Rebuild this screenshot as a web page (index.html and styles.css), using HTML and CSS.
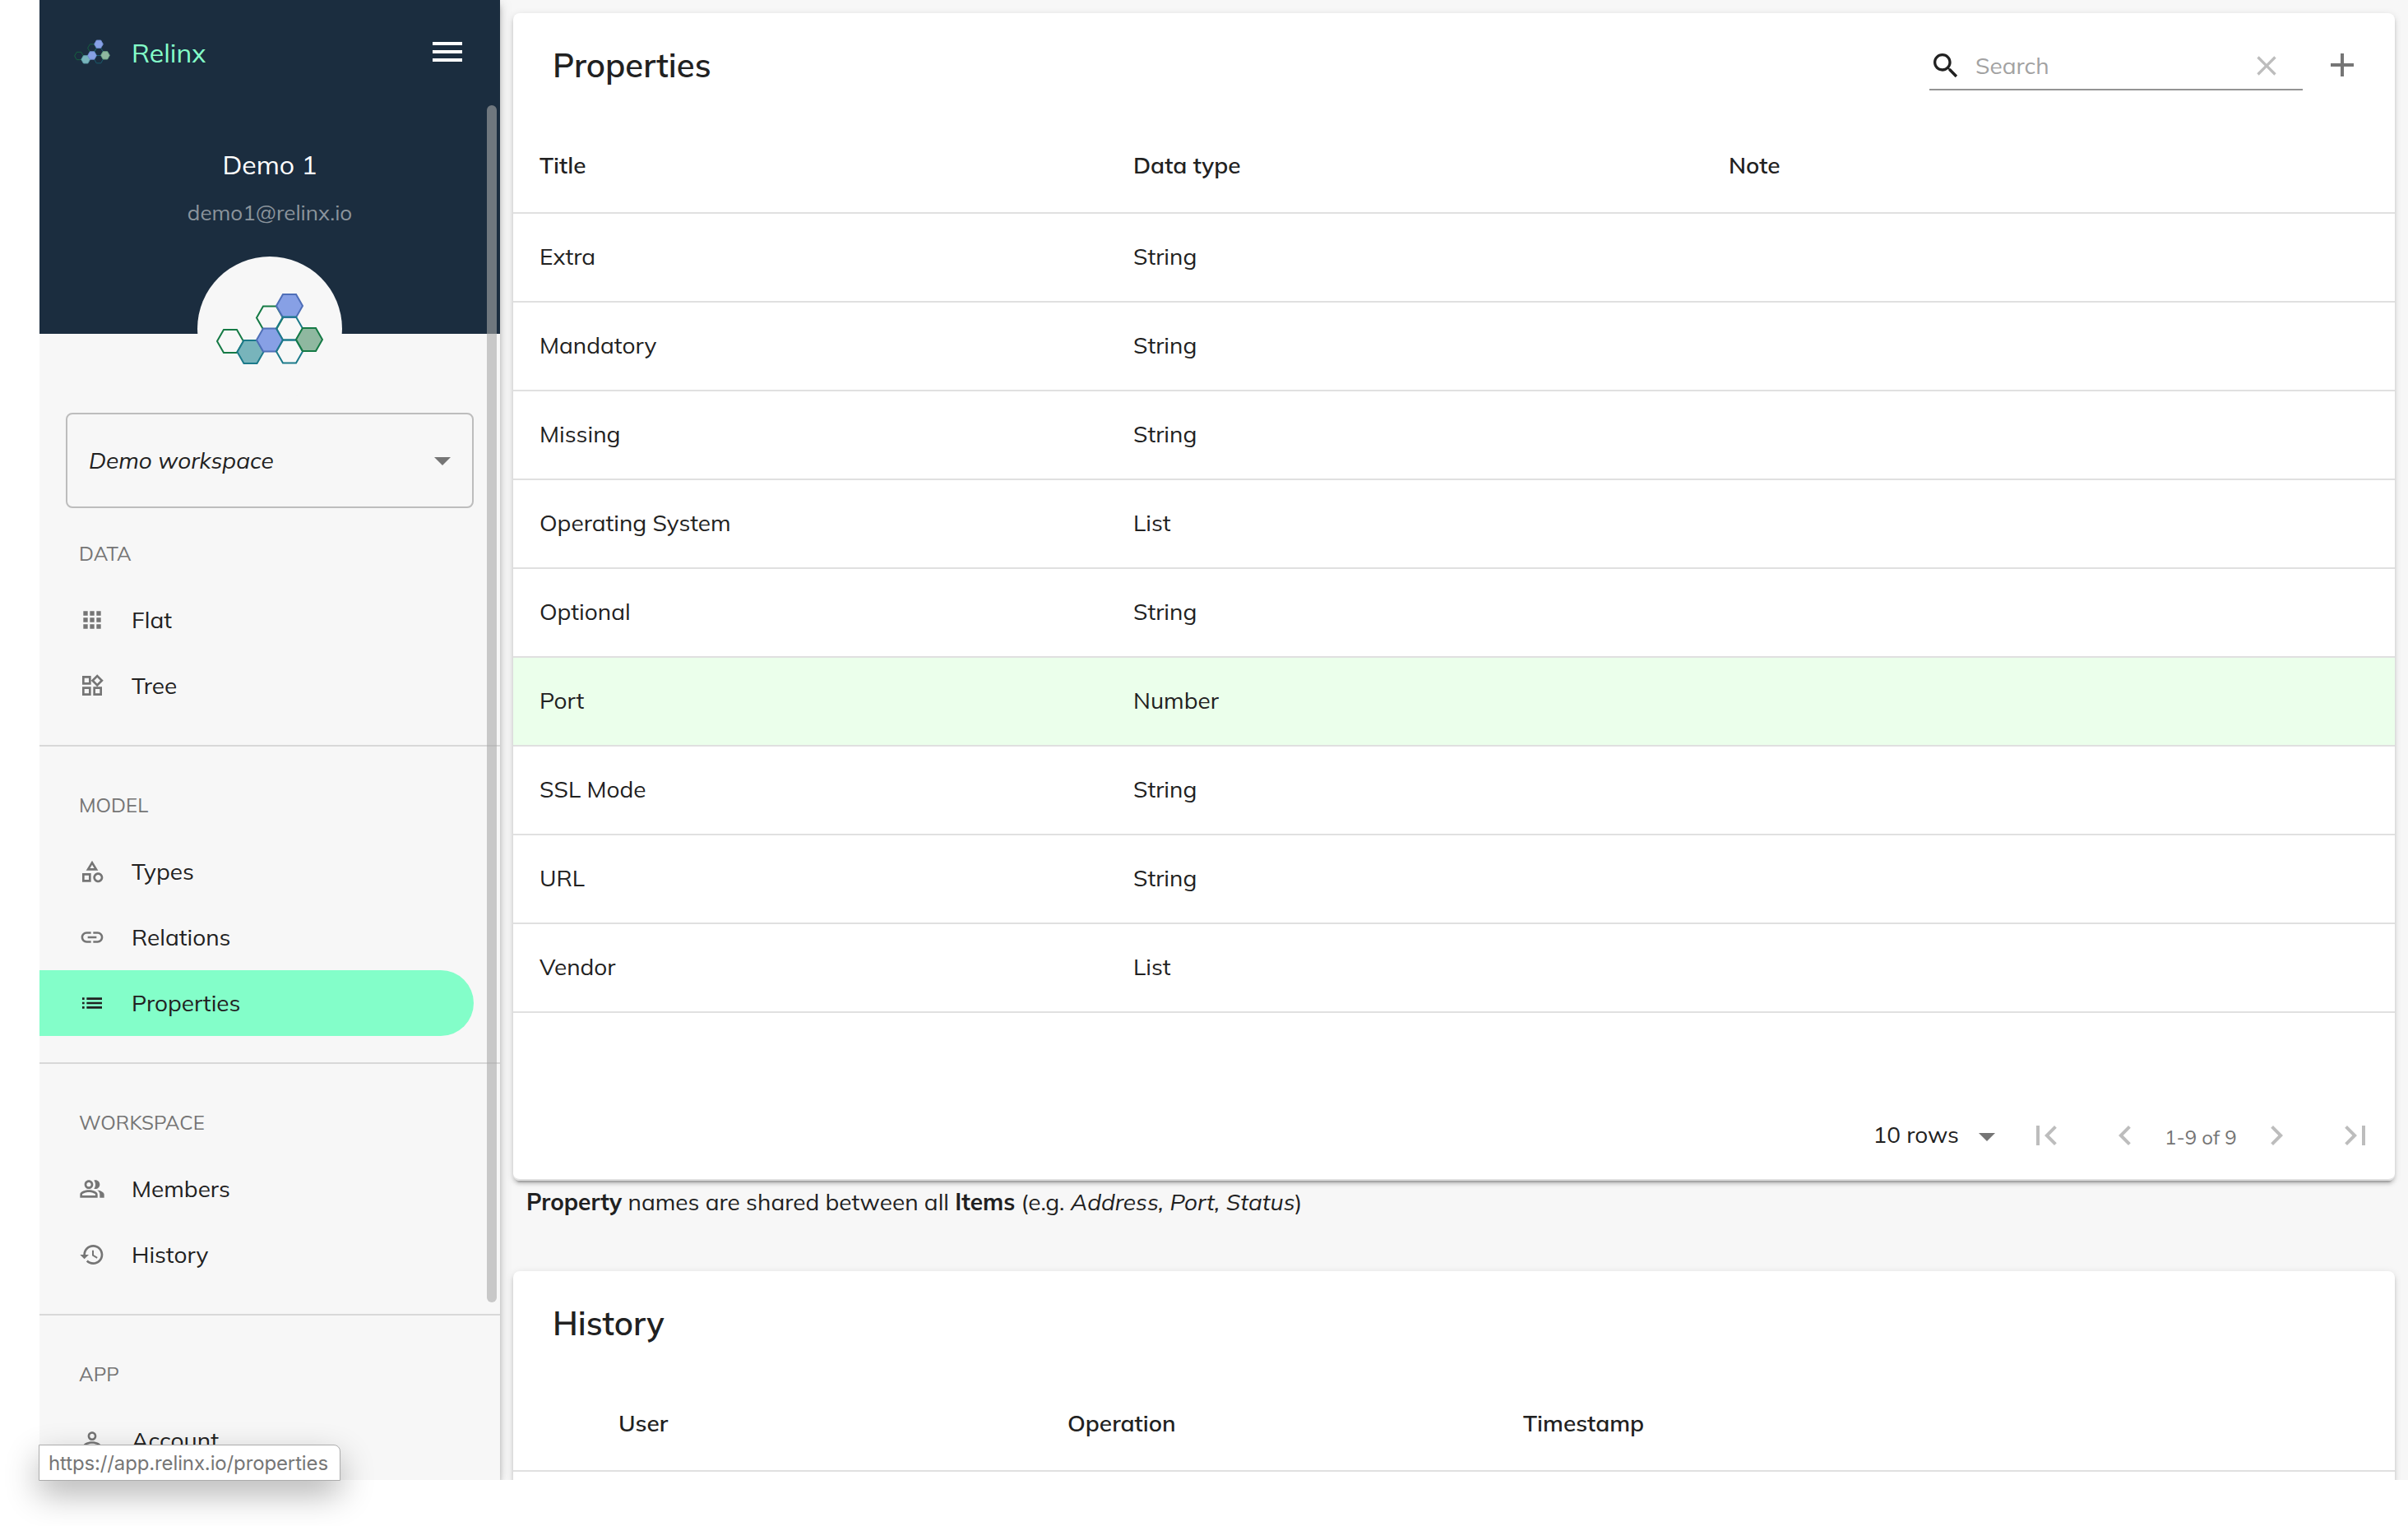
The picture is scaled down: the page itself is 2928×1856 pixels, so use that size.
FILE: index.html
```html
<!DOCTYPE html>
<html lang="en">
<head>
<meta charset="utf-8">
<title>Relinx - Properties</title>
<link rel="stylesheet" href="styles.css">
</head>
<body>
<svg class="defs" aria-hidden="true">
  <symbol id="logo" viewBox="0 0 132 88">
    <g stroke-width="2">
      <path d="M2 59l8-14h16l8 14l-8 14h-16z" fill="none" stroke="#157a45"/>
      <path d="M50 30.5l8-14h16l8 14l-8 14h-16z" fill="none" stroke="#157a45"/>
      <path d="M26.5 72l8-14h16l8 14l-8 14h-16z" fill="#78b4bb" stroke="#1c7a8a"/>
      <path d="M50 57.5l8-14h16l8 14l-8 14h-16z" fill="#87a0e5" stroke="#4f6fb8"/>
      <path d="M74 71.5l8-14h16l8 14l-8 14h-16z" fill="none" stroke="#1c7a8a"/>
      <path d="M74 16l8-14h16l8 14l-8 14h-16z" fill="#87a0e5" stroke="#4f6fb8"/>
      <path d="M74 43.5l8-14h16l8 14l-8 14h-16z" fill="none" stroke="#1c7a8a"/>
      <path d="M98 57l8-14h16l8 14l-8 14h-16z" fill="#8fb8a0" stroke="#157a45"/>
    </g>
  </symbol>
  <symbol id="logo-small" viewBox="0 0 132 88">
    <g stroke-width="2.8">
      <path d="M2 59l8-14h16l8 14l-8 14h-16z" fill="none" stroke="#176540"/>
      <path d="M50 30.5l8-14h16l8 14l-8 14h-16z" fill="none" stroke="#176540"/>
      <path d="M74 71.5l8-14h16l8 14l-8 14h-16z" fill="none" stroke="#1b5f70"/>
      <path d="M74 43.5l8-14h16l8 14l-8 14h-16z" fill="none" stroke="#1b5f70"/>
      <path d="M26.5 72l8-14h16l8 14l-8 14h-16z" fill="#78b4bb" stroke="#5fa0ab"/>
      <path d="M50 57.5l8-14h16l8 14l-8 14h-16z" fill="#87a0e5" stroke="#728fd4"/>
      <path d="M74 16l8-14h16l8 14l-8 14h-16z" fill="#87a0e5" stroke="#728fd4"/>
      <path d="M98 57l8-14h16l8 14l-8 14h-16z" fill="#8fb8a0" stroke="#6aa784"/>
    </g>
  </symbol>
</svg>

<div class="window">
  <aside class="sidebar">
    <header class="brand">
      <svg class="brand-logo"><use href="#logo-small"/></svg>
      <span class="brand-name">Relinx</span>
      <svg class="icon-48 menu" viewBox="0 0 24 24"><path d="M3 18h18v-2H3v2zm0-5h18v-2H3v2zm0-7v2h18V6H3z"/></svg>
    </header>
    <section class="profile">
      <div class="profile-name">Demo 1</div>
      <div class="profile-email">demo1@relinx.io</div>
      <div class="avatar"><svg><use href="#logo"/></svg></div>
    </section>
    <div class="workspace">
      <span>Demo workspace</span>
      <svg class="icon-48" viewBox="0 0 24 24"><path d="M7 10l5 5 5-5z"/></svg>
    </div>
    <nav>
      <section class="group group-first">
        <h3>DATA</h3>
        <a class="item"><svg viewBox="0 0 24 24"><path d="M4 8h4V4H4v4zm6 12h4v-4h-4v4zm-6 0h4v-4H4v4zm0-6h4v-4H4v4zm6 0h4v-4h-4v4zm6-10v4h4V4h-4zm-6 4h4V4h-4v4zm6 6h4v-4h-4v4zm0 6h4v-4h-4v4z"/></svg>Flat</a>
        <a class="item"><svg viewBox="0 0 24 24"><path d="M16.66 4.52l2.83 2.83-2.83 2.83-2.83-2.83 2.83-2.83M9 5v4H5V5h4m10 10v4h-4v-4h4M9 15v4H5v-4h4m7.66-13.31L11 7.34 16.66 13l5.66-5.66-5.66-5.65zM11 3H3v8h8V3zm10 10h-8v8h8v-8zm-10 0H3v8h8v-8z"/></svg>Tree</a>
      </section>
      <section class="group">
        <h3>MODEL</h3>
        <a class="item"><svg viewBox="0 0 24 24"><path d="M12 2l-5.5 9h11L12 2zm0 3.84L13.93 9h-3.87L12 5.84zM17.5 13c-2.49 0-4.5 2.01-4.5 4.5s2.01 4.5 4.5 4.5 4.5-2.01 4.5-4.5-2.01-4.5-4.5-4.5zm0 7c-1.38 0-2.5-1.12-2.5-2.5s1.12-2.5 2.5-2.5 2.5 1.12 2.5 2.5-1.12 2.5-2.5 2.5zM3 21.5h8v-8H3v8zm2-6h4v4H5v-4z"/></svg>Types</a>
        <a class="item"><svg viewBox="0 0 24 24"><path d="M3.9 12c0-1.71 1.39-3.1 3.1-3.1h4V7H7c-2.76 0-5 2.24-5 5s2.24 5 5 5h4v-1.9H7c-1.71 0-3.1-1.39-3.1-3.1zM8 13h8v-2H8v2zm9-6h-4v1.9h4c1.71 0 3.1 1.39 3.1 3.1s-1.39 3.1-3.1 3.1h-4V17h4c2.76 0 5-2.24 5-5s-2.24-5-5-5z"/></svg>Relations</a>
        <a class="item active"><svg viewBox="0 0 24 24"><path d="M3 13h2v-2H3v2zm0 4h2v-2H3v2zm0-8h2V7H3v2zm4 4h14v-2H7v2zm0 4h14v-2H7v2zM7 7v2h14V7H7z"/></svg>Properties</a>
      </section>
      <section class="group">
        <h3>WORKSPACE</h3>
        <a class="item"><svg viewBox="0 0 24 24"><path d="M16.67 13.13C18.04 14.06 19 15.32 19 17v3h4v-3c0-2.18-3.57-3.47-6.33-3.87zM15 12c2.21 0 4-1.79 4-4s-1.79-4-4-4c-.47 0-.91.1-1.33.24C14.5 5.27 15 6.58 15 8s-.5 2.73-1.33 3.76c.42.14.86.24 1.33.24zM9 12c2.21 0 4-1.79 4-4s-1.79-4-4-4-4 1.79-4 4 1.79 4 4 4zm0-6c1.1 0 2 .9 2 2s-.9 2-2 2-2-.9-2-2 .9-2 2-2zM9 13c-2.67 0-8 1.34-8 4v3h16v-3c0-2.66-5.33-4-8-4zm6 5H3v-.99C3.2 16.29 6.3 15 9 15s5.8 1.29 6 2v1z"/></svg>Members</a>
        <a class="item"><svg viewBox="0 0 24 24"><path d="M13 3c-4.97 0-9 4.03-9 9H1l3.89 3.89.07.14L9 12H6c0-3.87 3.13-7 7-7s7 3.13 7 7-3.13 7-7 7c-1.93 0-3.68-.79-4.94-2.06l-1.42 1.42C8.27 19.99 10.51 21 13 21c4.97 0 9-4.03 9-9s-4.03-9-9-9zm-1 5v5l4.28 2.54.72-1.21-3.5-2.08V8H12z"/></svg>History</a>
      </section>
      <section class="group">
        <h3>APP</h3>
        <a class="item"><svg viewBox="0 0 24 24"><path d="M12 5.9c1.16 0 2.1.94 2.1 2.1s-.94 2.1-2.1 2.1S9.9 9.16 9.9 8s.94-2.1 2.1-2.1m0 9c2.97 0 6.1 1.46 6.1 2.1v1.1H5.9V17c0-.64 3.13-2.1 6.1-2.1M12 4C9.79 4 8 5.79 8 8s1.79 4 4 4 4-1.79 4-4-1.79-4-4-4zm0 9c-2.67 0-8 1.34-8 4v3h16v-3c0-2.66-5.33-4-8-4z"/></svg>Account</a>
      </section>
    </nav>
    <div class="scroll-thumb"></div>
  </aside>

  <main>
    <section class="card">
      <header class="toolbar">
        <h2>Properties</h2>
        <div class="search">
          <svg class="icon-40 dark" viewBox="0 0 24 24"><path d="M15.5 14h-.79l-.28-.27C15.41 12.59 16 11.11 16 9.5 16 5.91 13.09 3 9.5 3S3 5.91 3 9.5 5.91 16 9.5 16c1.61 0 3.09-.59 4.23-1.57l.27.28v.79l5 4.99L20.49 19l-4.99-5zm-6 0C7.01 14 5 11.99 5 9.5S7.01 5 9.5 5 14 7.01 14 9.5 11.99 14 9.5 14z"/></svg>
          <span>Search</span>
          <svg class="icon-40 faint" viewBox="0 0 24 24"><path d="M19 6.41L17.59 5 12 10.59 6.41 5 5 6.41 10.59 12 5 17.59 6.41 19 12 13.41 17.59 19 19 17.59 13.41 12z"/></svg>
        </div>
        <svg class="icon-48 add" viewBox="0 0 24 24"><path d="M19 13h-6v6h-2v-6H5v-2h6V5h2v6h6v2z"/></svg>
      </header>
      <div class="row head"><span>Title</span><span>Data type</span><span>Note</span></div>
      <div class="row"><span>Extra</span><span>String</span></div>
      <div class="row"><span>Mandatory</span><span>String</span></div>
      <div class="row"><span>Missing</span><span>String</span></div>
      <div class="row"><span>Operating System</span><span>List</span></div>
      <div class="row"><span>Optional</span><span>String</span></div>
      <div class="row selected"><span>Port</span><span>Number</span></div>
      <div class="row"><span>SSL Mode</span><span>String</span></div>
      <div class="row"><span>URL</span><span>String</span></div>
      <div class="row"><span>Vendor</span><span>List</span></div>
      <footer class="pager">
        <span class="rows">10 rows</span>
        <svg class="icon-48 caret" viewBox="0 0 24 24"><path d="M7 10l5 5 5-5z"/></svg>
        <span class="page-btn"><svg viewBox="0 0 24 24"><path d="M18.41 16.59L13.82 12l4.59-4.59L17 6l-6 6 6 6zM6 6h2v12H6z"/></svg></span>
        <span class="page-btn"><svg viewBox="0 0 24 24"><path d="M15.41 7.41L14 6l-6 6 6 6 1.41-1.41L10.83 12z"/></svg></span>
        <span class="range">1-9 of 9</span>
        <span class="page-btn"><svg viewBox="0 0 24 24"><path d="M10 6L8.59 7.41 13.17 12l-4.58 4.59L10 18l6-6z"/></svg></span>
        <span class="page-btn"><svg viewBox="0 0 24 24"><path d="M5.59 7.41L10.18 12l-4.59 4.59L7 18l6-6-6-6zM16 6h2v12h-2z"/></svg></span>
      </footer>
    </section>

    <p class="note"><b>Property</b> names are shared between all <b>Items</b> (e.g. <i>Address, Port, Status</i>)</p>

    <section class="card">
      <header class="toolbar"><h2>History</h2></header>
      <div class="row head history"><span>User</span><span>Operation</span><span>Timestamp</span></div>
      <div class="filler"></div>
    </section>
  </main>
</div>
<div class="status">https://app.relinx.io/properties</div>
</body>
</html>
```
FILE: styles.css
```css
* { box-sizing: border-box; }

body {
  margin: 0;
  background: #fff;
  color: #212121;
  font: 28px/40px Mulish, Lato, sans-serif;
  position: relative;
  height: 1856px;
  overflow: hidden;
}

.defs { position: absolute; width: 0; height: 0; }
svg { display: block; flex: none; fill: #757575; }
.icon-48 { width: 48px; height: 48px; }
.icon-40 { width: 40px; height: 40px; }
.dark { fill: #212121; }
.faint { fill: #bdbdbd; }

.window {
  display: flex;
  height: 1800px;
  margin-left: 48px;
  overflow: hidden;
  background: #f7f7f7;
}

/* Sidebar */
.sidebar {
  position: relative;
  z-index: 1;
  flex: none;
  width: 560px;
  background: #f7f7f7;
  box-shadow: 0 6px 6px -2px rgba(0,0,0,.2), 0 6px 8px rgba(0,0,0,.14), 0 2px 16px rgba(0,0,0,.12);
}
.brand {
  display: flex;
  align-items: center;
  height: 128px;
  padding: 0 40px 0 42px;
  background: #1b2d3f;
}
.brand-logo { width: 44px; height: 30px; }
.brand-name {
  flex: 1;
  padding: 2px 0 0 26px;
  color: #84ffc9;
  font-size: 32px;
}
.brand > * { margin-top: -2px; }
.menu { fill: #fff; }
.profile {
  display: flex;
  flex-direction: column;
  align-items: center;
  height: 278px;
  padding-top: 52px;
  background: #1b2d3f;
}
.profile-name { color: #fff; font-size: 32px; }
.profile-email {
  margin-top: 19px;
  color: #8b949c;
  font-size: 26px;
}
.avatar {
  flex: none;
  display: flex;
  align-items: center;
  justify-content: center;
  width: 176px;
  height: 176px;
  margin-top: 33px;
  border-radius: 50%;
  background: #f7f7f7;
}
.avatar svg { width: 132px; height: 88px; }

.workspace {
  display: flex;
  align-items: center;
  justify-content: space-between;
  height: 116px;
  margin: 96px 32px 16px;
  padding: 0 12px 0 26px;
  border: 2px solid #bdbdbd;
  border-radius: 8px;
  font-style: italic;
}

.group {
  border-top: 2px solid #d8d8d8;
  padding: 32px 0;
}
.group-first { border: 0; padding-top: 0; }
.group h3 {
  margin: 0;
  padding-left: 48px;
  color: #757575;
  font-size: 24px;
  font-weight: 400;
  line-height: 79px;
  height: 80px;
}
.item {
  display: flex;
  align-items: center;
  gap: 32px;
  height: 80px;
  margin-right: 32px;
  padding-left: 48px;
}
.item svg { width: 32px; height: 32px; }
.item.active {
  background: #83fec9;
  border-radius: 0 40px 40px 0;
}
.item.active svg { fill: #212121; }
.scroll-thumb {
  position: absolute;
  left: 544px;
  top: 128px;
  width: 12px;
  height: 1456px;
  border-radius: 6px;
  background: rgba(169,169,169,.6);
}

/* Content */
main {
  flex: 1;
  padding: 16px;
}
.card {
  background: #fff;
  border-radius: 8px;
  box-shadow: 0 6px 2px -4px rgba(0,0,0,.2), 0 4px 4px rgba(0,0,0,.14), 0 2px 10px rgba(0,0,0,.12);
}
.toolbar {
  display: flex;
  align-items: center;
  height: 128px;
  padding: 0 40px 0 48px;
}
h2 {
  flex: 1;
  margin: 0;
  padding-bottom: 3px;
  font-size: 40px;
  font-weight: 600;
}
.search {
  display: flex;
  align-items: center;
  width: 454px;
  height: 60px;
  padding-top: 2px;
  border-bottom: 2px solid #949494;
  color: #a2a2a2;
}
.search span { flex: 1; padding-left: 16px; }
.search .faint { margin-right: 24px; }
.add { margin: -2px 0 0 24px; }

.row {
  display: grid;
  grid-template-columns: 722px 724px 1fr;
  align-items: center;
  height: 108px;
  padding: 0 32px 3px;
  border-bottom: 2px solid #e0e0e0;
}
.row.head {
  height: 116px;
  padding-bottom: 0;
  font-weight: 600;
}
.row.selected { background: #ebffeb; }
.row.history {
  grid-template-columns: 546px 554px 1fr;
  padding-left: 128px;
}

.pager {
  display: flex;
  align-items: center;
  height: 204px;
  padding-top: 96px;
  border-bottom: 2px solid #e0e0e0;
  border-radius: 0 0 8px 8px;
}
.rows { margin-left: auto; padding-bottom: 3px; }
.caret { margin: 2px 0 0 10px; }
.page-btn {
  display: flex;
  justify-content: center;
  width: 96px;
}
.page-btn svg { width: 48px; height: 48px; fill: #bdbdbd; }
.range {
  width: 88px;
  color: #757575;
  font-size: 24px;
  white-space: nowrap;
  padding-top: 3px;
}
.note {
  height: 110px;
  margin: 0;
  padding: 6px 16px 0;
}
.filler { height: 200px; }

/* Link target bubble */
.status {
  position: absolute;
  z-index: 2;
  left: 47px;
  top: 1757px;
  height: 44px;
  width: 367px;
  padding-left: 11px;
  border: 1px solid #acacac;
  border-radius: 0 8px 0 0;
  background: #fff;
  color: #767676;
  font: 24px/43px Inter, sans-serif;
  letter-spacing: -.13px;
  white-space: nowrap;
  box-shadow: 0 16px 40px rgba(0,0,0,.3);
}
```
